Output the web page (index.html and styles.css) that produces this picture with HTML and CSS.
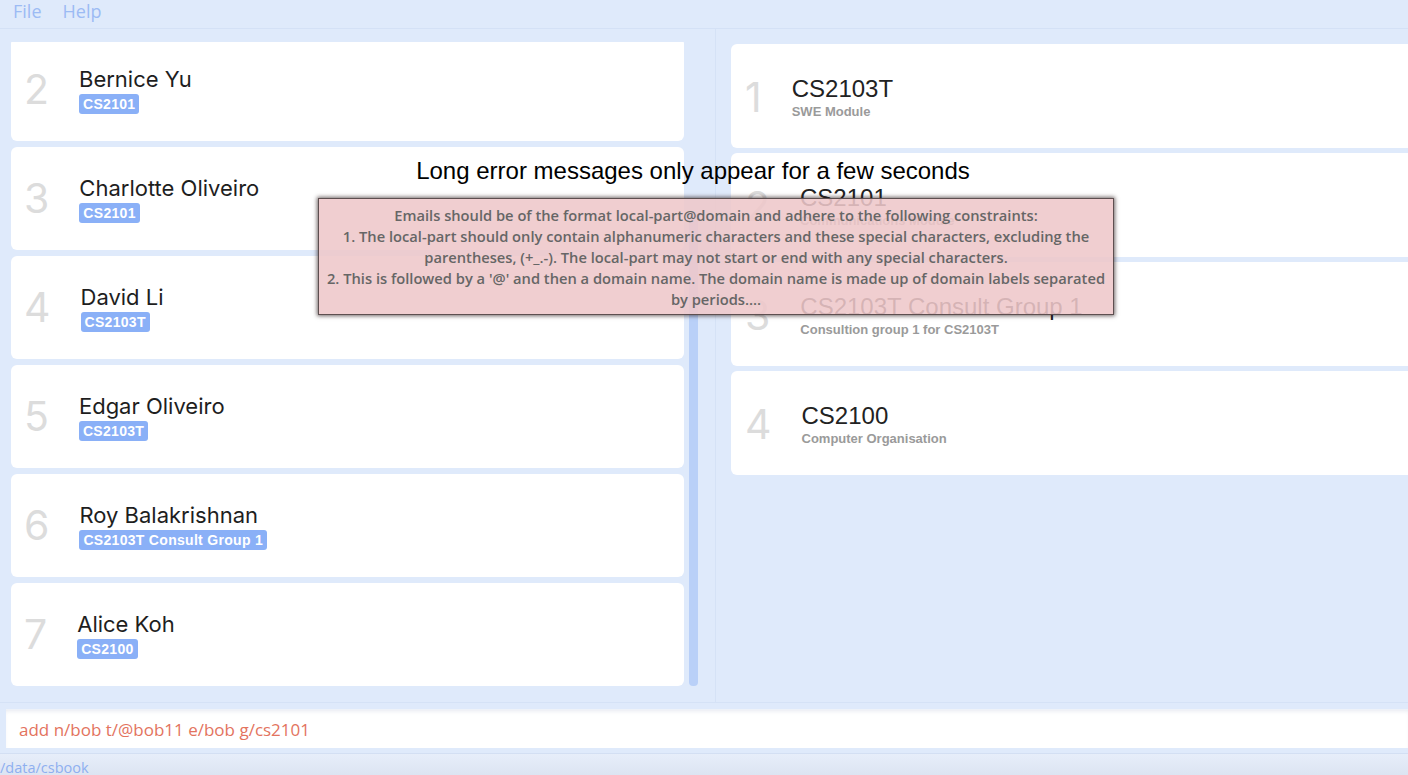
FILE: index.html
```html
<!DOCTYPE html>
<html lang="en">
<head>
<meta charset="utf-8">
<title>CSBook</title>
<link rel="stylesheet" href="styles.css">
</head>
<body>
<div class="app">
  <nav class="menubar">
    <span class="menu-item">File</span>
    <span class="menu-item">Help</span>
  </nav>

  <main class="main">
    <section class="left-pane">
      <div class="list-viewport">
        <div class="person-list">
          <div class="card person">
            <div class="index">2</div>
            <div class="info">
              <div class="name">Bernice Yu</div>
              <span class="tag">CS2101</span>
            </div>
          </div>
          <div class="card person">
            <div class="index">3</div>
            <div class="info">
              <div class="name">Charlotte Oliveiro</div>
              <span class="tag">CS2101</span>
            </div>
          </div>
          <div class="card person">
            <div class="index">4</div>
            <div class="info">
              <div class="name">David Li</div>
              <span class="tag">CS2103T</span>
            </div>
          </div>
          <div class="card person">
            <div class="index">5</div>
            <div class="info">
              <div class="name">Edgar Oliveiro</div>
              <span class="tag">CS2103T</span>
            </div>
          </div>
          <div class="card person">
            <div class="index">6</div>
            <div class="info">
              <div class="name">Roy Balakrishnan</div>
              <span class="tag">CS2103T Consult Group 1</span>
            </div>
          </div>
          <div class="card person">
            <div class="index">7</div>
            <div class="info">
              <div class="name">Alice Koh</div>
              <span class="tag">CS2100</span>
            </div>
          </div>
        </div>
      </div>
      <div class="scrollbar"><div class="thumb"></div></div>
    </section>

    <section class="right-pane">
      <div class="card group">
        <div class="index">1</div>
        <div class="info">
          <div class="title">CS2103T</div>
          <div class="subtitle">SWE Module</div>
        </div>
      </div>
      <div class="card group">
        <div class="index">2</div>
        <div class="info">
          <div class="title">CS2101</div>
          <div class="subtitle">Communications Module</div>
        </div>
      </div>
      <div class="card group">
        <div class="index">3</div>
        <div class="info">
          <div class="title">CS2103T Consult Group 1</div>
          <div class="subtitle">Consultion group 1 for CS2103T</div>
        </div>
      </div>
      <div class="card group">
        <div class="index">4</div>
        <div class="info">
          <div class="title">CS2100</div>
          <div class="subtitle">Computer Organisation</div>
        </div>
      </div>
    </section>
  </main>

  <div class="command-bar">
    <div class="command-box">add n/bob t/@bob11 e/bob g/cs2101</div>
  </div>

  <footer class="status">/data/csbook</footer>

  <div class="toast-heading">Long error messages only appear for a few seconds</div>
  <div class="toast-box">
    Emails should be of the format local-part@domain and adhere to the following constraints:<br>
    1. The local-part should only contain alphanumeric characters and these special characters, excluding the<br>
    parentheses, (+_.-). The local-part may not start or end with any special characters.<br>
    2. This is followed by a '@' and then a domain name. The domain name is made up of domain labels separated<br>
    by periods....
  </div>
</div>
</body>
</html>
```

FILE: styles.css
```css
* { box-sizing: border-box; }

html, body {
  margin: 0;
  padding: 0;
  width: 1408px;
  height: 775px;
  overflow: hidden;
  background: #dfeafb;
}

.app {
  position: relative;
  width: 1408px;
  height: 775px;
  display: flex;
  flex-direction: column;
  font-family: "Open Sans", "Liberation Sans", sans-serif;
}

/* menu */
.menubar {
  height: 29px;
  flex: none;
  display: flex;
  align-items: center;
  gap: 21px;
  padding: 0 0 6px 13px;
  border-bottom: 1px solid #d4e1f6;
  background: #dfeafb;
}
.menu-item {
  font-family: "Open Sans", sans-serif;
  font-size: 18px;
  color: #9cbbf4;
}

/* main */
.main {
  flex: none;
  height: 673px;
  display: flex;
}

.left-pane {
  width: 716px;
  flex: none;
  display: flex;
  border-right: 1px solid #d5e2f6;
  padding: 13px 0 0 11px;
}
.list-viewport {
  width: 673px;
  height: 645px;
  overflow: hidden;
}
.person-list {
  margin-top: -4px;
  display: flex;
  flex-direction: column;
  gap: 6px;
}
.scrollbar {
  width: 10px;
  margin-left: 5px;
  padding-top: 170px;
  height: 644px;
}
.thumb {
  width: 9px;
  height: 100%;
  border-radius: 4px;
  background: #b9d0f8;
}

.card {
  background: #ffffff;
  border-radius: 6px;
  display: flex;
  align-items: center;
  flex: none;
}
.person {
  height: 103px;
  padding-left: 13px;
}
.index {
  font-family: "Inter", "Liberation Sans", sans-serif;
  font-size: 41px;
  color: #dcdcdc;
  line-height: 1;
}
.person .index { margin-right: 30px; }

.info { display: flex; flex-direction: column; align-items: flex-start; }

.name {
  font-family: "Inter", "Liberation Sans", sans-serif;
  font-size: 22px;
  line-height: 26px;
  color: #1e1e1e;
}
.tag {
  margin-top: 2px;
  height: 20px;
  line-height: 20px;
  padding: 0 4px;
  border-radius: 3px;
  background: #8ab0f7;
  color: #ffffff;
  font-family: "Liberation Sans", Arial, sans-serif;
  font-weight: bold;
  font-size: 14px;
  letter-spacing: 0.3px;
}

.right-pane {
  flex: 1;
  overflow: hidden;
  padding: 15px 0 0 15px;
  display: flex;
  flex-direction: column;
  gap: 5px;
}
.group {
  width: 740px;
  height: 104px;
  padding-left: 14px;
  padding-top: 3px;
}
.group .index { margin-right: 30px; }
.title {
  font-family: "Liberation Sans", Arial, sans-serif;
  font-size: 24px;
  line-height: 28px;
  color: #222222;
}
.subtitle {
  margin-top: 1px;
  font-family: "Liberation Sans", Arial, sans-serif;
  font-weight: bold;
  font-size: 13px;
  line-height: 16px;
  color: #9a9a9a;
}

/* command */
.command-bar {
  flex: none;
  height: 51px;
  border-top: 1px solid #d5e2f6;
  padding: 6px 0 5px 6px;
}
.command-box {
  height: 39px;
  background: #ffffff;
  border-top: 1px solid #eef2f8;
  box-shadow: inset 0 3px 4px -2px rgba(180, 190, 210, 0.35);
  padding-left: 13px;
  display: flex;
  align-items: center;
  font-family: "Open Sans", sans-serif;
  font-size: 17px;
  color: #e3735e;
}

.status {
  flex: 1;
  background: linear-gradient(#e7eefa, #dbe3f1);
  border-top: 1px solid #d3dff3;
  font-family: "Open Sans", sans-serif;
  font-size: 14.5px;
  color: #8eaff0;
  padding: 4px 0 0 0;
}

/* toast overlay */
.toast-heading {
  position: absolute;
  left: 0;
  width: 1386px;
  top: 157px;
  text-align: center;
  font-family: "Liberation Sans", Arial, sans-serif;
  font-size: 24px;
  line-height: 28px;
  color: #000000;
}
.toast-box {
  position: absolute;
  left: 318px;
  top: 198px;
  width: 796px;
  height: 117px;
  background: rgba(238, 199, 201, 0.88);
  border: 1px solid #5e4f50;
  box-shadow: 0 0 4px 1px rgba(40, 25, 25, 0.65);
  padding: 6px 0 0 0;
  text-align: center;
  white-space: nowrap;
  font-family: "Open Sans", sans-serif;
  font-weight: 600;
  font-size: 14.7px;
  line-height: 21px;
  color: #666666;
}
```
